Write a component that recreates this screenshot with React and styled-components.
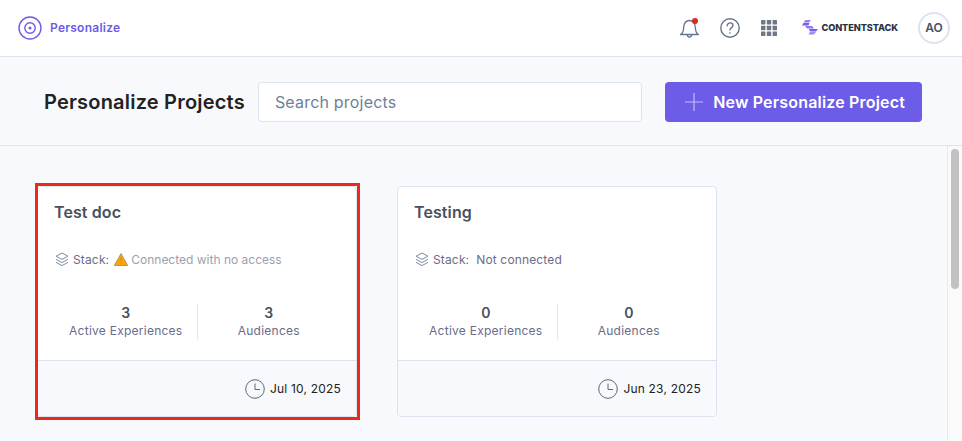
import React from 'react';
import styled, { createGlobalStyle } from 'styled-components';

const GlobalStyle = createGlobalStyle`
  html, body, #root { height: 100%; }
  body {
    margin: 0;
    overflow: hidden;
    font-family: Inter, "Liberation Sans", sans-serif;
    background: #f7f9fc;
  }
  * { box-sizing: border-box; }
`;

const Page = styled.div`
  display: flex;
  flex-direction: column;
  height: 441px;
`;

const Header = styled.header`
  display: flex;
  align-items: center;
  height: 57px;
  padding: 0 12px 1px 18px;
  background: #fff;
  border-bottom: 1px solid #dde3ee;
`;

const Brand = styled.div`
  display: flex;
  align-items: center;
  gap: 8px;
  font-size: 12px;
  font-weight: 600;
  letter-spacing: 0.25px;
  color: #6c5ce7;
`;

const HeaderRight = styled.div`
  display: flex;
  align-items: center;
  margin-left: auto;
`;

const IconSlot = styled.div`
  position: relative;
  display: flex;
  width: ${(props) => props.size}px;
  height: ${(props) => props.size}px;
  margin-right: ${(props) => props.gap}px;
  color: #64748f;
`;

const RedDot = styled.span`
  position: absolute;
  top: 1px;
  right: 3px;
  width: 6px;
  height: 6px;
  border-radius: 50%;
  background: #e0281c;
`;

const Logo = styled.div`
  display: flex;
  align-items: center;
  gap: 3px;
  margin-right: 20px;
  font-size: 9.2px;
  font-weight: 800;
  letter-spacing: -0.1px;
  color: #2a3145;
`;

const Avatar = styled.div`
  display: flex;
  align-items: center;
  justify-content: center;
  width: 32px;
  height: 32px;
  border-radius: 50%;
  border: 2px solid #dde3ee;
  font-size: 12px;
  font-weight: 600;
  color: #475161;
`;

const Toolbar = styled.div`
  display: flex;
  align-items: center;
  height: 89px;
  padding: 1px 40px 0 44px;
  border-bottom: 1px solid #dde3ee;
`;

const Title = styled.h1`
  margin: 0 13px 0 0;
  font-size: 20px;
  font-weight: 600;
  letter-spacing: 0.2px;
  color: #222222;
`;

const SearchInput = styled.input`
  width: 384px;
  height: 40px;
  padding: 0 16px;
  border: 1px solid #dde3ee;
  border-radius: 4px;
  background: #fff;
  font: 400 16px Inter, sans-serif;
  letter-spacing: 0.2px;
  color: #222;
  outline: none;
  &::placeholder { color: #6e7f9c; opacity: 1; }
`;

const NewButton = styled.button`
  display: flex;
  align-items: center;
  gap: 10px;
  height: 40px;
  margin-left: auto;
  padding: 0 17px 0 20px;
  border: none;
  border-radius: 4px;
  background: #6c5ce7;
  color: #fff;
  font: 600 16px Inter, sans-serif;
  letter-spacing: 0.18px;
`;

const Content = styled.main`
  flex: 1;
  display: flex;
  min-height: 0;
`;

const ScrollArea = styled.div`
  flex: 1;
  overflow: hidden;
`;

const ScrollTrack = styled.div`
  width: 15px;
  padding: 3px 3px 0;
  background: #fafafa;
  border-left: 1px solid #e8e8e8;
`;

const ScrollThumb = styled.div`
  width: 8px;
  height: 140px;
  border-radius: 4px;
  background: #c2c2c2;
`;

const CardGrid = styled.div`
  display: flex;
  gap: 40px;
  padding: 40px 0 0 37px;
`;

const Card = styled.article`
  position: relative;
  display: flex;
  flex-direction: column;
  width: 320px;
  height: 231px;
  border: 1px solid #dde3ee;
  border-radius: 4px;
  background: #fff;
`;

const Highlight = styled.div`
  position: absolute;
  top: -4px;
  right: -4px;
  bottom: -4px;
  left: -3px;
  border: 3px solid #ea2a1c;
  pointer-events: none;
`;

const CardBody = styled.div`
  flex: 1;
  padding: 15px 16px 0;
`;

const CardTitle = styled.h2`
  margin: 0;
  font-size: 16px;
  line-height: 20px;
  font-weight: 600;
  letter-spacing: 0.1px;
  color: #475161;
`;

const StackRow = styled.div`
  display: flex;
  align-items: center;
  margin-top: 28px;
  height: 18px;
  font-size: 12px;
  letter-spacing: 0.15px;
  color: #6b6b8a;
`;

const StackLabel = styled.span`
  margin: 0 5px 0 4px;
`;

const StackStatus = styled.span`
  margin-left: ${(props) => (props.$muted ? '3px' : '2px')};
  letter-spacing: ${(props) => (props.$muted ? '0' : '0.15px')};
  color: ${(props) => (props.$muted ? '#9b9fb0' : '#6b6b8a')};
`;

const Stats = styled.div`
  display: grid;
  grid-template-columns: 1fr 1fr;
  margin-top: 36px;
  padding-left: 1px;
`;

const Stat = styled.div`
  display: flex;
  flex-direction: column;
  align-items: center;
  height: 36px;
  border-right: ${(props) => (props.$first ? '1px solid #e4e7ec' : 'none')};
`;

const StatValue = styled.div`
  font-size: 14px;
  line-height: 18px;
  font-weight: 600;
  color: #475161;
`;

const StatLabel = styled.div`
  font-size: 12px;
  line-height: 18px;
  letter-spacing: 0.25px;
  color: #6b6b8a;
`;

const CardFooter = styled.footer`
  display: flex;
  align-items: center;
  justify-content: flex-end;
  gap: 5px;
  height: 56px;
  padding: 0 15px 0 0;
  border-top: 1px solid #dde3ee;
  border-radius: 0 0 4px 4px;
  background: #f7f9fc;
  font-size: 12px;
  letter-spacing: 0.2px;
  color: #222222;
`;

const StackIconWrap = styled.span`
  display: flex;
  margin-left: 1px;
`;

const TargetIcon = () => (
  <svg width="24" height="24" viewBox="0 0 24 24" fill="none" stroke="#6c5ce7" strokeWidth="1.4">
    <circle cx="12" cy="12" r="11" />
    <circle cx="12" cy="12" r="5.2" />
    <circle cx="12" cy="12" r="1.5" fill="#6c5ce7" stroke="none" />
  </svg>
);

const BellIcon = () => (
  <svg width="22" height="22" viewBox="0 0 22 22" fill="none" stroke="currentColor" strokeWidth="1.3" strokeLinejoin="round">
    <path d="M1.500 17.500c1.800-1 3-2.500 3.100-6.500C4.800 6.300 7.200 3.500 10.500 3.500s5.700 2.800 5.900 7.500c.1 4 1.300 5.500 3.100 6.500z" />
    <path d="M8.300 17.800c.2 1.500 1.100 2.200 2.200 2.200s2-.7 2.200-2.200" />
  </svg>
);

const HelpIcon = () => (
  <svg width="20" height="20" viewBox="0 0 20 20" fill="none" stroke="currentColor" strokeWidth="1.4" strokeLinecap="round">
    <circle cx="10" cy="10" r="9.200" />
    <path d="M7.200 7.800c0-1.800 1.300-2.900 2.900-2.900s2.800 1.100 2.800 2.500c0 2.300-2.900 2.200-2.900 4.700" />
    <circle cx="10" cy="15" r="0.8" fill="currentColor" stroke="none" />
  </svg>
);

const GridIcon = () => (
  <svg width="16" height="16" viewBox="0 0 16 16" fill="#6f7785">
    {[0, 5.800, 11.600].map((y) =>
      [0, 5.800, 11.600].map((x) => <rect key={`${x}-${y}`} x={x} y={y} width="4.400" height="4.400" rx="0.4" />)
    )}
  </svg>
);

const ContentstackMark = () => (
  <svg width="16" height="15" viewBox="0 0 16 15" fill="#7c5cf0">
    <path d="M3.500 0H9L7 2.500H1.500z" opacity="0.8" />
    <path d="M1.500 3H7.500L6.500 5.500H0z" />
    <path d="M3 6H10L12 8.500H5z" opacity="0.85" />
    <path d="M7 9H16L14 11.500H8z" />
    <path d="M8 12H14L12 14.500H6.500z" opacity="0.7" />
  </svg>
);

const PlusIcon = () => (
  <svg width="18" height="18" viewBox="0 0 18 18" stroke="#c4bdf6" strokeWidth="1.2">
    <path d="M9 0v18M0 9h18" />
  </svg>
);

const LayersIcon = () => (
  <StackIconWrap>
    <svg width="14" height="15" viewBox="0 0 14 15" fill="none" stroke="#6e7f9c" strokeWidth="0.9" strokeLinejoin="round">
      <path d="M7 1l6 3.200-6 3.200-6-3.200z" />
      <path d="M1 7.400l6 3.200 6-3.200" />
      <path d="M1 10.400l6 3.200 6-3.200" />
    </svg>
  </StackIconWrap>
);

const WarningIcon = () => (
  <svg width="14" height="13" viewBox="0 0 14 13">
    <path d="M7 .5 13.700 12.500H.3z" fill="#f9a50c" stroke="#8a7040" strokeWidth="0.6" strokeLinejoin="round" />
    <path d="M7 4.500v4M7 9.800v.9" stroke="#d08c10" strokeWidth="1" />
  </svg>
);

const ClockIcon = () => (
  <svg width="20" height="20" viewBox="0 0 20 20" fill="none" stroke="#5d6778" strokeWidth="1">
    <circle cx="10" cy="10" r="9.300" />
    <path d="M10 4.500V10.500H15" />
  </svg>
);

const projects = [
  { name: 'Test doc', experiences: 3, audiences: 3, date: 'Jul 10, 2025', marked: true },
  { name: 'Testing', experiences: 0, audiences: 0, date: 'Jun 23, 2025' },
];

const ProjectCard = ({ project }) => (
  <Card>
    <CardBody>
      <CardTitle>{project.name}</CardTitle>
      <StackRow>
        <LayersIcon />
        <StackLabel>Stack:</StackLabel>
        {project.marked ? (
          <>
            <WarningIcon />
            <StackStatus $muted>Connected with no access</StackStatus>
          </>
        ) : (
          <StackStatus>Not connected</StackStatus>
        )}
      </StackRow>
      <Stats>
        <Stat $first>
          <StatValue>{project.experiences}</StatValue>
          <StatLabel>Active Experiences</StatLabel>
        </Stat>
        <Stat>
          <StatValue>{project.audiences}</StatValue>
          <StatLabel>Audiences</StatLabel>
        </Stat>
      </Stats>
    </CardBody>
    <CardFooter>
      <ClockIcon />
      {project.date}
    </CardFooter>
    {project.marked && <Highlight />}
  </Card>
);

const App = () => (
  <Page>
    <GlobalStyle />
    <Header>
      <Brand>
        <TargetIcon />
        Personalize
      </Brand>
      <HeaderRight>
        <IconSlot size={22} gap={19}>
          <BellIcon />
          <RedDot />
        </IconSlot>
        <IconSlot size={20} gap={21}>
          <HelpIcon />
        </IconSlot>
        <IconSlot size={16} gap={25}>
          <GridIcon />
        </IconSlot>
        <Logo>
          <ContentstackMark />
          CONTENTSTACK
        </Logo>
        <Avatar>AO</Avatar>
      </HeaderRight>
    </Header>
    <Toolbar>
      <Title>Personalize Projects</Title>
      <SearchInput placeholder="Search projects" />
      <NewButton>
        <PlusIcon />
        New Personalize Project
      </NewButton>
    </Toolbar>
    <Content>
      <ScrollArea>
        <CardGrid>
          {projects.map((project) => (
            <ProjectCard key={project.name} project={project} />
          ))}
        </CardGrid>
      </ScrollArea>
      <ScrollTrack>
        <ScrollThumb />
      </ScrollTrack>
    </Content>
  </Page>
);

export default App;
